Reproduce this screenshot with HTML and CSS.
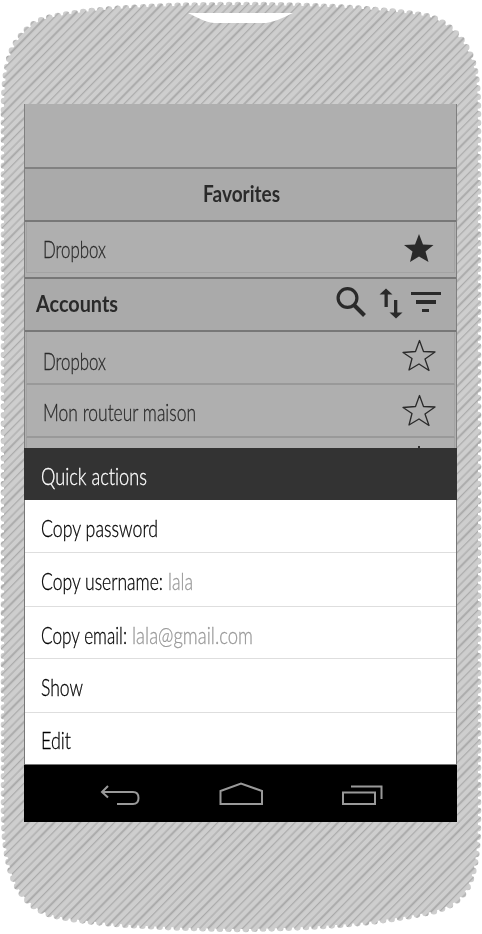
FILE: index.html
```
<!DOCTYPE html>
<html lang="en">
<head>
<meta charset="utf-8">
<title>Accounts</title>
<link rel="stylesheet" href="styles.css">
</head>
<body>
<div class="phone">
  <svg class="shell" viewBox="0 0 482 934" aria-hidden="true">
    <defs>
      <pattern id="hatch" width="18.4" height="18.4" patternUnits="userSpaceOnUse" patternTransform="rotate(44.5)">
        <rect width="18.4" height="18.4" fill="#cecece"/>
        <path d="M2 0V19M14.2 0V19" stroke="#a7a7a7" stroke-width="1.1"/>
        <path d="M8 0V19" stroke="#a8a8a8" stroke-width="1.9"/>
      </pattern>
      <path id="outline" d="M4 110C4 85 6 68 11 53C17 38 29 25 42 20C72 10 150 5 241 5C325 5 396 10 430 17C451 24 466 42 472 60C477 75 478 90 478 120V820C478 850 475 874 466 890C457 904 444 910 420 914C370 924 310 928 241 929C160 928 90 924 52 915C30 909 15 889 10 868C5 848 4 830 4 810Z"/>
      <mask id="silhouette" maskUnits="userSpaceOnUse" x="0" y="0" width="482" height="934">
        <use href="#outline" fill="#fff"/>
        <use href="#outline" class="scallop"/>
      </mask>
    </defs>
    <rect width="482" height="934" fill="url(#hatch)" mask="url(#silhouette)"/>
    <path d="M188 13H293C281 19 273 22 266 23H214C205 22 198 18 188 13Z" fill="#fff"/>
  </svg>

  <main class="screen">
    <section class="backdrop">
      <div class="blank"></div>
      <h2 class="heading centered"><span class="label strong" data-width="77">Favorites</span></h2>
      <div class="favorite">
        <div class="favorite-card">
          <span class="label" data-width="63">Dropbox</span>
          <svg class="star filled" width="34" height="34"><path d="M17 2L21 12.5L31.5 13L23.5 19.5L26.5 30L17 24.5L8 30L10.5 19.5L2 13L13 12.5Z"/></svg>
        </div>
      </div>
      <h2 class="heading accounts">
        <span class="label strong" data-width="82">Accounts</span>
        <svg class="tools" width="110" height="34">
          <circle cx="12.5" cy="12" r="9.4" fill="none" stroke="#2a2a2a" stroke-width="3.2"/>
          <path d="M19.5 19.5L29.5 29.5" fill="none" stroke="#2a2a2a" stroke-width="4"/>
          <path d="M51 2.5L57.5 8.5H52.8V21H49.5V8.5H44.5ZM59 14H62.3V26.5H67.5L61 32.5L54.5 26.5H59ZM76 6H106V9H76ZM81 14H101V18H81ZM87 23H94V26H87Z" fill="#2a2a2a"/>
        </svg>
      </h2>
      <div class="account">
        <span class="label" data-width="63">Dropbox</span>
        <svg class="star" width="34" height="34"><path d="M17.5 1.5L21.5 12.5L33 13L23 20L27 31.5L17 25L7 31L10 19.5L1 13.5L13.5 12.5Z"/></svg>
      </div>
      <div class="account">
        <span class="label" data-width="153">Mon routeur maison</span>
        <svg class="star lowered" width="34" height="34"><path d="M17.5 1.5L21.5 12.5L33 13L23 20L27 31.5L17 25L7 31L10 19.5L1 13.5L13.5 12.5Z"/></svg>
      </div>
      <div class="account partial"><i class="tip"></i></div>
    </section>

    <section class="sheet">
      <h2 class="sheet-title"><span class="label" data-width="106">Quick actions</span></h2>
      <ul class="actions">
        <li><span class="label" data-width="117">Copy password</span></li>
        <li><span class="label" data-width="122">Copy username:</span><span class="label value" data-width="25">lala</span></li>
        <li><span class="label" data-width="86">Copy email:</span><span class="label value" data-width="121">lala@gmail.com</span></li>
        <li><span class="label" data-width="42">Show</span></li>
        <li><span class="label" data-width="30">Edit</span></li>
      </ul>
    </section>

    <nav class="navbar">
      <svg width="42" height="26"><path d="M9 4L3 10L9 15.5M3 10H34Q39.5 10 39.5 16Q39.5 22 34 22H18"/></svg>
      <svg width="46" height="26"><path d="M3.5 22V9L24 1.5L45 9V22Z"/></svg>
      <svg width="46" height="26"><path d="M4 10.5H36V22H4ZM12 4.5H42.5V17"/></svg>
    </nav>
  </main>
</div>
<script src="labels.js"></script>
</body>
</html>
```
FILE: labels.js
```
// Condense each label horizontally to its data-width.
for (const label of document.querySelectorAll('.label')) {
  const natural = label.getBoundingClientRect().width;
  const width = Number(label.dataset.width);
  label.style.transform = `scaleX(${width / natural})`;
  label.style.marginRight = `${width - natural}px`;
}
```
FILE: styles.css
```
* { box-sizing: border-box; }
body { margin: 0; background: #fff; }
h2, ul { margin: 0; padding: 0; }
ul { list-style: none; }

.phone {
  position: relative;
  width: 482px;
  height: 934px;
  padding: 104px 25px 112px 24px;
  overflow: hidden;
}
.shell { position: absolute; left: 0; top: 0; width: 482px; height: 934px; }
.scallop {
  fill: none;
  stroke: #fff;
  stroke-width: 6.6;
  stroke-linecap: round;
  stroke-dasharray: 0 8.6;
}

.screen {
  position: relative;
  height: 718px;
  display: flex;
  flex-direction: column;
  font-family: Lato, "Open Sans", sans-serif;
}
.label {
  flex: none;
  align-self: flex-start;
  font-size: 24px;
  line-height: 30px;
  font-weight: 300;
  white-space: nowrap;
  transform-origin: left;
  -webkit-text-stroke: .3px currentColor;
  font-variant-ligatures: none;
}
.strong { font-size: 23px; font-weight: 700; -webkit-text-stroke: 0; }
.value { color: #999; }

.backdrop {
  height: 344px;
  flex: none;
  display: flex;
  flex-direction: column;
  overflow: hidden;
  background: #afafaf;
  color: #2a2a2a;
  border: solid #808080;
  border-width: 0 1px;
}
.blank { height: 65px; flex: none; border-bottom: 2px solid #818181; }
.heading { height: 53px; flex: none; display: flex; background: #aaa; border-bottom: 2px solid #777; }
.centered { justify-content: center; padding: 9px 0 0 1px; }
.favorite { height: 57px; flex: none; padding: 0 1px 5px; border-bottom: 2px solid #777; }
.favorite-card {
  height: 51px;
  display: flex;
  justify-content: space-between;
  padding: 12px 18px 0 16px;
  border: solid #a3a3a3;
  border-width: 0 1px 1px;
}
.star { flex: none; margin-top: -2px; fill: none; stroke: #2a2a2a; stroke-width: 1.3; stroke-linejoin: round; }
.filled { fill: #2a2a2a; stroke: none; }
.accounts { justify-content: space-between; padding: 9px 11px 0 11px; }
.tools { flex: none; margin-top: -2px; }
.account {
  height: 53px;
  flex: none;
  display: flex;
  justify-content: space-between;
  margin: 0 1px;
  padding: 14px 18px 0 16px;
  border: solid #a3a3a3;
  border-width: 0 1px 2px;
  border-bottom-color: #999;
}
.account .star { margin-top: -7px; }
.account + .account { padding-top: 12px; }
.account .lowered { margin-top: -3px; }
.account.partial { height: 16px; justify-content: flex-end; padding: 8px 34px 0 0; }
.tip { width: 2px; height: 2px; background: #333; }

.sheet { flex: none; background: #fff; color: #000; border: solid #777; border-width: 0 1px; }
.sheet-title { display: flex; height: 52px; margin: 0 -1px; padding: 13px 0 0 17px; background: #333; color: #fff; }
.actions { display: grid; grid-template-rows: 53px 54px 52px 54px 52px; }
.actions li { display: flex; gap: 5px; padding: 13px 0 0 16px; border-bottom: 1px solid #dedede; }
.actions li:last-child { padding-top: 12px; border-bottom-color: #777; }

.navbar {
  height: 57px;
  flex: none;
  display: flex;
  gap: 76px;
  padding: 17px 0 0 75px;
  background: #000;
}
.navbar svg { fill: none; stroke: #999; stroke-width: 2; }
```
